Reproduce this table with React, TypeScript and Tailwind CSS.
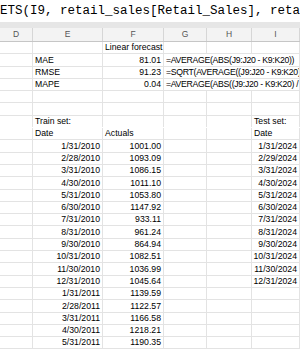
import React from "react"

type Cell = { text?: string; align?: "l" | "r"; span?: number; formula?: boolean }

const cols = ["D", "E", "F", "G", "H", "I"]

const trainDates = [
  "1/31/2010", "2/28/2010", "3/31/2010", "4/30/2010", "5/31/2010", "6/30/2010",
  "7/31/2010", "8/31/2010", "9/30/2010", "10/31/2010", "11/30/2010", "12/31/2010",
  "1/31/2011", "2/28/2011", "3/31/2011", "4/30/2011", "5/31/2011",
]
const actuals = [
  "1001.00", "1093.09", "1086.15", "1011.10", "1053.80", "1147.92", "933.11",
  "961.24", "864.94", "1082.51", "1036.99", "1045.64", "1139.59", "1122.57",
  "1166.58", "1218.21", "1190.35",
]
const testDates = [
  "1/31/2024", "2/29/2024", "3/31/2024", "4/30/2024", "5/31/2024", "6/30/2024",
  "7/31/2024", "8/31/2024", "9/30/2024", "10/31/2024", "11/30/2024", "12/31/2024",
]

const metric = (name: string, value: string, formula: string): Cell[] => [
  {},
  { text: name },
  { text: value, align: "r" },
  { text: formula, span: 3, formula: true },
]

const rows: Cell[][] = [
  [{}, {}, { text: "Linear forecast" }, {}, {}, {}],
  metric("MAE", "81.01", "=AVERAGE(ABS(J9:J20 - K9:K20))"),
  metric("RMSE", "91.23", "=SQRT(AVERAGE((J9:J20 - K9:K20)^2))"),
  metric("MAPE", "0.04", "=AVERAGE(ABS((J9:J20 - K9:K20) / J9:J20))"),
  [{}, {}, {}, {}, {}, {}],
  [{}, {}, {}, {}, {}, {}],
  [{}, { text: "Train set:" }, {}, {}, {}, { text: "Test set:" }],
  [{}, { text: "Date" }, { text: "Actuals" }, {}, {}, { text: "Date" }],
  ...trainDates.map((d, i): Cell[] => [
    {},
    { text: d, align: "r" },
    { text: actuals[i], align: "r" },
    {},
    {},
    { text: testDates[i], align: "r" },
  ]),
]

const spanClass: Record<number, string> = { 1: "col-span-1", 3: "col-span-3" }

export default function App() {
  return (
    <div className="w-[300px] h-[350px] overflow-hidden bg-white font-['Liberation_Sans',Arial,sans-serif] text-black">
      {/* formula bar */}
      <div className="h-[22px] flex items-center whitespace-nowrap overflow-hidden font-['Liberation_Mono',monospace] text-[12.5px] text-black">
        ETS(I9, retail_sales[Retail_Sales], retai
      </div>
      <div className="h-[6px] bg-[#e6e6e6]" />

      {/* column headers */}
      <div className="grid grid-cols-[33px_70px_61px_43px_45px_1fr] h-[14px] bg-[#f3f3f3] border-b border-[#c6c6c6]">
        {cols.map((c) => (
          <div
            key={c}
            className="flex items-center justify-center border-r border-[#d6d6d6] text-[8.5px] text-[#555]"
          >
            {c}
          </div>
        ))}
      </div>

      {/* sheet body */}
      <div className="flex flex-col text-[8.7px]">
        {rows.map((row, r) => (
          <div
            key={r}
            className={`grid grid-cols-[33px_70px_61px_43px_45px_1fr] h-[12.3px] ${
              r === 6 ? "border-b border-white" : "border-b border-[#e3e3e3]"
            }`}
          >
            {row.map((cell, c) => (
              <div
                key={c}
                className={`${spanClass[cell.span ?? 1]} border-r border-[#e3e3e3] flex items-center whitespace-nowrap overflow-hidden leading-none ${
                  cell.align === "r" ? "justify-end pr-[2px]" : "justify-start pl-[2px]"
                } ${cell.formula ? "tracking-[-0.3px]" : ""}`}
              >
                {cell.text}
              </div>
            ))}
          </div>
        ))}
      </div>
    </div>
  )
}
